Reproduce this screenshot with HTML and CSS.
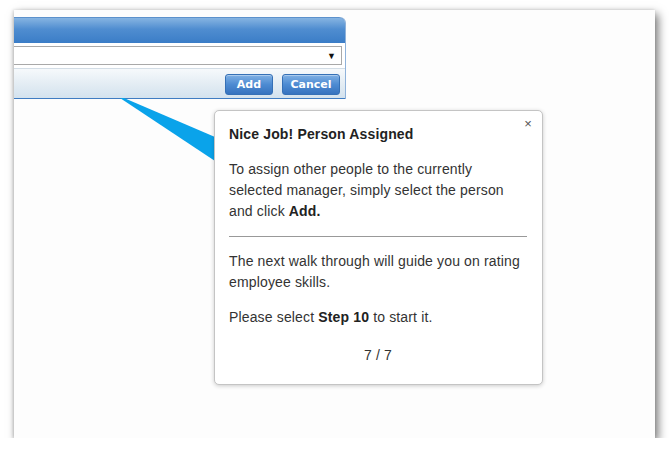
FILE: index.html
```html
<!doctype html>
<html lang="en">

<head>
    <meta charset="utf-8">
    <title>Walk Through - Step 7</title>
    <link rel="stylesheet" href="styles.css">
</head>

<body>
    <div class="screen">
        <div class="panel">
            <div class="panel-header"></div>
            <div class="panel-body">
                <div class="picker"><span class="picker-arrow">▼</span></div>
            </div>
            <div class="panel-footer">
                <button type="button" class="btn btn-add">Add</button>
                <button type="button" class="btn btn-cancel">Cancel</button>
            </div>
        </div>

        <!-- pointer from the panel to the tip -->
        <svg class="beam" width="641" height="428" viewBox="0 0 641 428">
            <polygon points="106,88 110,88 201,127 201,151" fill="#0aa3ea" />
        </svg>

        <div class="tip">
            <span class="tip-close">×</span>
            <h3 class="tip-title">Nice Job! Person Assigned</h3>
            <p>To assign other people to the currently selected manager, simply select the person and click <b>Add.</b></p>
            <hr>
            <p>The next walk through will guide you on rating employee skills.</p>
            <p>Please select <b>Step 10</b> to start it.</p>
            <div class="tip-count">7 / 7</div>
        </div>
    </div>
</body>

</html>
```

FILE: styles.css
```css
html, body {
    margin: 0;
    padding: 0;
    background: #ffffff;
    font-family: 'Liberation Sans', Arial, sans-serif;
}

.screen {
    position: relative;
    margin: 10px 0 0 14px;
    width: 641px;
    height: 428px;
    background: #fdfdfd;
    box-shadow: 3px 4px 9px rgba(0, 0, 0, 0.55), -1px 0 3px rgba(0, 0, 0, 0.15);
    overflow: hidden;
}

/* dialog behind the tip */
.panel {
    width: 346px;
    margin: 7px 0 0 -15px;
    border-right: 1px solid #8fb2da;
    border-top-right-radius: 6px;
}

.panel-header {
    height: 26px;
    background: linear-gradient(180deg, #86b4e2 0%, #4f8dd0 45%, #3b7dc7 100%);
    border-top: 1px solid #5c91cc;
    border-top-right-radius: 6px;
    box-sizing: border-box;
}

.panel-body {
    background: #ffffff;
    padding: 3px 3px 3px 0;
}

.picker {
    height: 19px;
    border: 1px solid #a9a9a9;
    box-sizing: border-box;
    background: #ffffff;
    display: flex;
    justify-content: flex-end;
    align-items: center;
    padding-right: 5px;
}

.picker-arrow {
    font-size: 9px;
    color: #111;
}

.panel-footer {
    height: 31px;
    box-sizing: border-box;
    border-top: 1px solid #d3dde6;
    border-bottom: 1px solid #3f7cc2;
    background: linear-gradient(180deg, #f6f9fb 0%, #e4edf4 50%, #d3e2ee 100%);
    display: flex;
    justify-content: flex-end;
    align-items: flex-start;
    gap: 9px;
    padding: 5px 5px 0 0;
}

.btn {
    height: 21px;
    padding: 0;
    border: 1px solid #3570b6;
    border-radius: 3px;
    background: linear-gradient(180deg, #7fb0e4 0%, #4d8bd2 50%, #3673bf 100%);
    color: #ffffff;
    font-family: 'DejaVu Sans', Verdana, sans-serif;
    font-size: 11px;
    font-weight: bold;
    box-shadow: inset 0 1px 0 rgba(255, 255, 255, 0.35);
}

.btn-add { width: 48px; }
.btn-cancel { width: 58px; }

.beam {
    position: absolute;
    left: 0;
    top: 0;
}

/* walk through tip */
.tip {
    position: absolute;
    left: 200px;
    top: 100px;
    width: 329px;
    box-sizing: border-box;
    padding: 13px 15px 18px 14px;
    background: #ffffff;
    border: 1px solid #c4c4c4;
    border-radius: 5px;
    box-shadow: 0 1px 4px rgba(0, 0, 0, 0.2);
    color: #333333;
    font-size: 14px;
    letter-spacing: 0.15px;
    line-height: 21px;
}

.tip-close {
    position: absolute;
    top: 2px;
    right: 10px;
    font-size: 13px;
    color: #555;
}

.tip-title {
    margin: 0;
    font-size: 14px;
    font-weight: bold;
    color: #222222;
}

.tip p {
    margin: 14px 0 0 0;
}

.tip b { color: #222222; }

.tip hr {
    margin: 14px 0 0 0;
    border: 0;
    border-top: 1px solid #999999;
}

.tip-count {
    margin-top: 17px;
    text-align: center;
}
```
